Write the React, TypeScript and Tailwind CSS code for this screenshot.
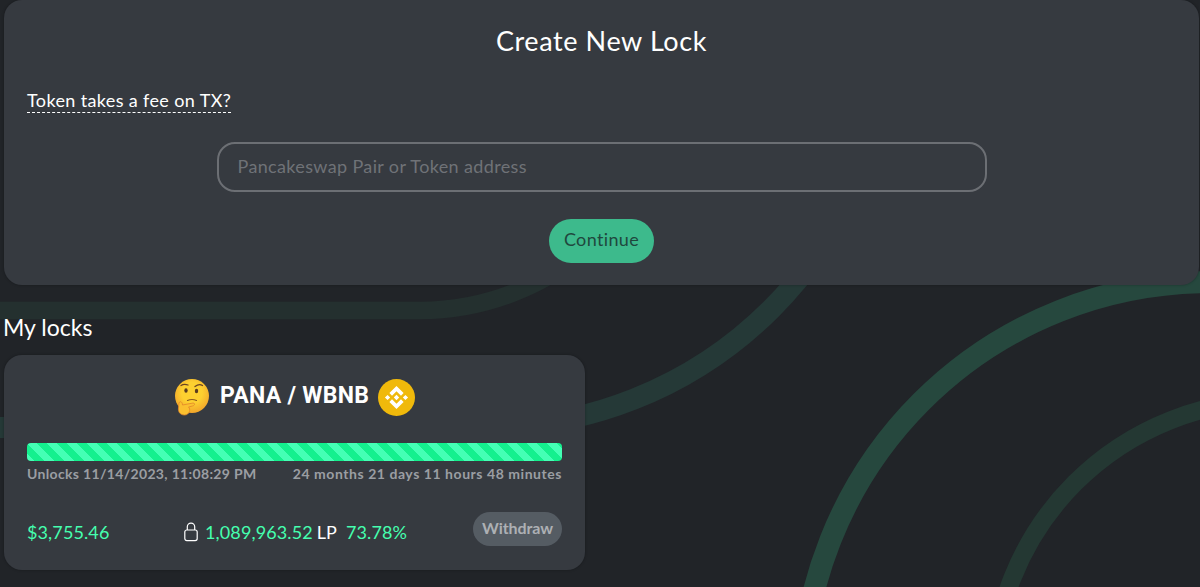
const stats = "text-[18px] tracking-[0.12px] text-[#45ffaf]";

function Background() {
  return (
    <svg className="absolute inset-0 -z-10" width="1200" height="587" viewBox="0 0 1200 587" fill="none">
      <path d="M0 310.5H420A257 257 0 0 0 677 53.5" stroke="#24302f" strokeWidth="17.5" />
      <path d="M0 427.5H485.3A404.5 404.5 0 0 0 889.8 23" stroke="#253937" strokeWidth="21" />
      <circle cx="1210" cy="690.5" r="408.3" stroke="#26483e" strokeWidth="22" />
      <circle cx="1274" cy="682" r="281.5" stroke="#243833" strokeWidth="18" />
    </svg>
  );
}

function ThinkingFace() {
  return (
    <svg width="36" height="38" viewBox="0 0 36 38">
      <defs>
        <radialGradient id="face" cx="0.5" cy="0.4" r="0.6">
          <stop offset="0.5" stopColor="#fdd030" />
          <stop offset="1" stopColor="#f2a52b" />
        </radialGradient>
      </defs>
      <circle cx="18" cy="18" r="17" fill="url(#face)" />
      <path d="M7 7.500Q10 5.500 14 7M21 8.500Q25 5.500 28.500 7.500" stroke="#6b4322" strokeWidth="1.300" fill="none" strokeLinecap="round" />
      <ellipse cx="12" cy="12.500" rx="1.700" ry="2.300" fill="#5a3b1f" />
      <ellipse cx="22.500" cy="13" rx="1.700" ry="2.300" fill="#5a3b1f" />
      <path d="M13.500 22.500Q18 20.500 22.500 22.500" stroke="#8a5a20" strokeWidth="1.200" fill="none" strokeLinecap="round" />
      <path
        d="M5 25C6 22.500 8.500 24 8.500 27L19 25C21.500 25 21 27.500 18.500 28L14.500 29C17 31 15.500 37 10.500 37C5.500 37 4 33 4.500 30Z"
        fill="#fbc02f"
        stroke="#e2872a"
        strokeWidth="0.800"
      />
    </svg>
  );
}

function BnbCoin() {
  return (
    <svg width="37" height="37" viewBox="0 0 32 32">
      <circle cx="16" cy="16" r="16" fill="#f0b90b" />
      <path
        fill="#fff"
        d="M12.116 14.404L16 10.520l3.886 3.886 2.260-2.260L16 6l-6.144 6.144 2.260 2.260zM6 16l2.260-2.260L10.520 16l-2.260 2.260L6 16zm6.116 1.596L16 21.480l3.886-3.886 2.260 2.259L16 26l-6.144-6.144-.003-.003 2.263-2.257zM21.480 16l2.260-2.260L26 16l-2.260 2.260L21.480 16zm-3.188-.002h.002V16L16 18.294l-2.291-2.290-.004-.004.004-.003.401-.402.195-.195L16 13.706l2.293 2.293z"
      />
    </svg>
  );
}

function LockIcon() {
  return (
    <svg width="14" height="20" viewBox="0 0 14 20" fill="none" stroke="#fff" strokeWidth="1.200">
      <rect x="0.800" y="8" width="12.400" height="10.600" rx="2" />
      <path d="M3.300 8V4.800a3.700 3.700 0 0 1 7.400 0V8" />
    </svg>
  );
}

function CreateLock() {
  return (
    <section className="ml-1 mr-px flex h-[285px] flex-col items-center rounded-[18px] bg-[#363a40] px-[23px] shadow-[0_0_3px_rgba(0,0,0,0.3)]">
      <h1 className="mt-[23px] text-[27px] leading-9 tracking-[0.6px]">Create New Lock</h1>
      <div className="mt-[30px] self-start border-b border-dashed border-white pb-px text-[18px] leading-[22px] tracking-[0.37px]">
        Token takes a fee on TX?
      </div>
      <input
        className="mt-[29px] h-[50px] w-[770px] rounded-[18px] border-2 border-[#6c6f74] bg-transparent px-[19px] pb-0.5 text-[18px] tracking-[0.36px] placeholder:text-[#6f7277]"
        placeholder="Pancakeswap Pair or Token address"
      />
      <button className="mt-[27px] h-[44px] w-[105px] rounded-full bg-[#3dba8c] pb-1 text-[18px] tracking-[0.36px] text-[#20483e]">
        Continue
      </button>
    </section>
  );
}

function LockCard() {
  return (
    <section className="ml-1 mt-[12px] h-[215px] w-[581px] rounded-[18px] bg-[#363a40] px-[23px] shadow-[0_0_3px_rgba(0,0,0,0.3)]">
      <div className="flex items-center pl-[147px] pt-[23px]">
        <ThinkingFace />
        <h3 className="ml-[10px] mr-2 w-[150px] whitespace-nowrap pb-0.5 font-[Roboto] text-[23px] font-bold leading-[34px] tracking-[0.3px]">
          PANA / WBNB
        </h3>
        <BnbCoin />
      </div>
      <div className="mt-[27px] h-[18px] rounded-[4px] bg-[#14f08e] bg-[linear-gradient(45deg,#44ffb5_25%,transparent_25%,transparent_50%,#44ffb5_50%,#44ffb5_75%,transparent_75%,transparent)] bg-[length:20px_20px]" />
      <div className="mt-[3px] flex justify-between text-[14px] font-bold leading-5 text-[#9b9ea3]">
        <span className="tracking-[0.33px]">Unlocks 11/14/2023, 11:08:29 PM</span>
        <span className="tracking-[0.55px]">24 months 21 days 11 hours 48 minutes</span>
      </div>
      <div className="mt-[28px] flex items-start">
        <span className={`mt-[7px] w-[157px] ${stats}`}>$3,755.46</span>
        <span className="mt-[10px]">
          <LockIcon />
        </span>
        <span className={`ml-[7px] mt-[7px] ${stats}`}>1,089,963.52</span>
        <span className="ml-1 mt-[7px] text-[18px]">LP</span>
        <span className={`ml-[9px] mt-[7px] ${stats}`}>73.78%</span>
        <button className="ml-auto h-[34px] w-[89px] rounded-full bg-[#555c63] pb-0.5 text-[16px] font-bold tracking-[-0.1px] text-[#adb0b4]">
          Withdraw
        </button>
      </div>
    </section>
  );
}

export default function App() {
  return (
    <main className="relative isolate h-[587px] w-[1200px] overflow-hidden bg-[#212428] font-[Lato,sans-serif] text-white">
      <Background />
      <CreateLock />
      <h2 className="ml-[3px] mt-[26px] text-[23px] leading-8">My locks</h2>
      <LockCard />
    </main>
  );
}
